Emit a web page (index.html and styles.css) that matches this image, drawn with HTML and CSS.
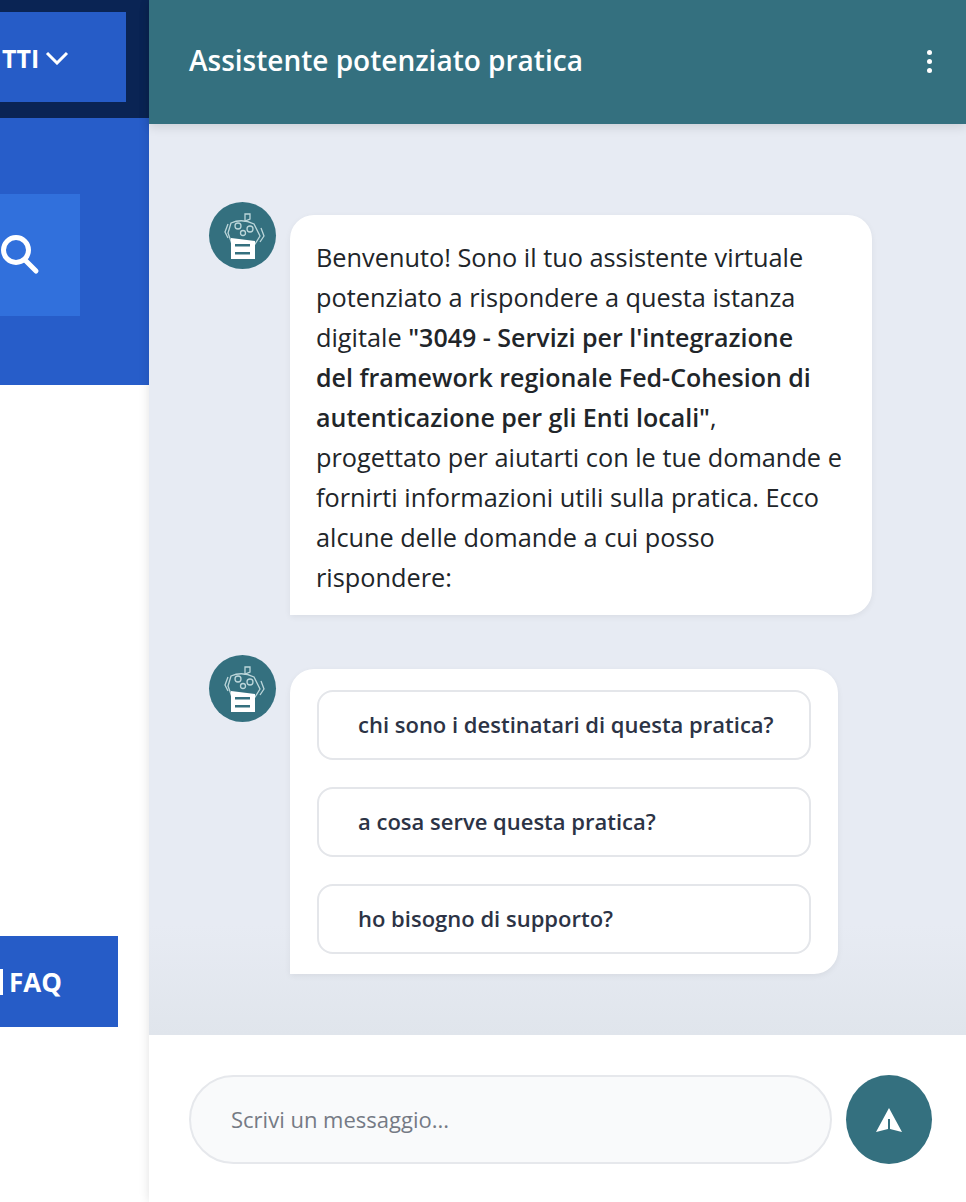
FILE: index.html
```html
<!DOCTYPE html>
<html lang="it">
<head>
    <meta charset="UTF-8">
    <title>Assistente potenziato pratica</title>
    <link rel="stylesheet" href="styles.css">
</head>
<body>

<div class="page">
    <div class="side">
        <div class="topbar">
            <div class="menu-button">
                <span>TTI</span>
                <svg class="chevron" width="24" height="14" viewBox="0 0 24 14"><path d="M2 2l10 10L22 2" fill="none" stroke="#fff" stroke-width="3"/></svg>
            </div>
        </div>
        <div class="hero">
            <div class="search-button">
                <svg width="40" height="44" viewBox="0 0 40 44"><circle cx="16" cy="17" r="12.5" fill="none" stroke="#fff" stroke-width="5"/><path d="M25 27l11 11" stroke="#fff" stroke-width="5" stroke-linecap="round"/></svg>
            </div>
        </div>
        <div class="side-body">
            <div class="faq-button"><span class="faq-icon"></span><span>FAQ</span></div>
        </div>
    </div>

    <div class="chat">
        <div class="chat-header">
            <h1>Assistente potenziato pratica</h1>
            <div class="dots"><span></span><span></span><span></span></div>
        </div>

        <div class="chat-body">
            <div class="message">
                <div class="avatar">
                    <svg width="46" height="50" viewBox="0 0 46 50">
                        <g fill="none" stroke="#bcd6da" stroke-width="1.3">
                            <path d="M11 12q11-5 23 1l6 12-5 8H12L8 22z"/>
                            <circle cx="18" cy="15" r="3"/><circle cx="30" cy="18" r="3"/><circle cx="23" cy="22" r="2.5"/>
                            <path d="M25 10V3h5v5z"/><path d="M8 13l-3 8 3 6M41 17l3 8-4 6"/>
                        </g>
                        <path d="M11 27l24 3v18H11z" fill="#fff"/>
                        <path d="M15 33h15v2.5H15zM15 41h15v2.5H15z" fill="#34707f"/>
                    </svg>
                </div>
                <div class="bubble text-bubble">
                    Benvenuto! Sono il tuo assistente virtuale potenziato a rispondere a questa istanza digitale <b>"3049 - Servizi per l'integrazione<br>del framework regionale Fed-Cohesion di autenticazione per gli Enti locali"</b>, progettato per aiutarti con le tue domande e fornirti informazioni utili sulla pratica. Ecco alcune delle domande a cui posso rispondere:
                </div>
            </div>

            <div class="message">
                <div class="avatar">
                    <svg width="46" height="50" viewBox="0 0 46 50">
                        <g fill="none" stroke="#bcd6da" stroke-width="1.3">
                            <path d="M11 12q11-5 23 1l6 12-5 8H12L8 22z"/>
                            <circle cx="18" cy="15" r="3"/><circle cx="30" cy="18" r="3"/><circle cx="23" cy="22" r="2.5"/>
                            <path d="M25 10V3h5v5z"/><path d="M8 13l-3 8 3 6M41 17l3 8-4 6"/>
                        </g>
                        <path d="M11 27l24 3v18H11z" fill="#fff"/>
                        <path d="M15 33h15v2.5H15zM15 41h15v2.5H15z" fill="#34707f"/>
                    </svg>
                </div>
                <div class="bubble options-bubble">
                    <div class="option">chi sono i destinatari di questa pratica?</div>
                    <div class="option">a cosa serve questa pratica?</div>
                    <div class="option">ho bisogno di supporto?</div>
                </div>
            </div>
        </div>

        <div class="chat-footer">
            <div class="chat-input">Scrivi un messaggio...</div>
            <div class="send-button">
                <svg width="28" height="26" viewBox="0 0 28 26"><path d="M14 1l13 24-12-3V12h-2v10L1 25z" fill="#fff"/></svg>
            </div>
        </div>
    </div>
</div>

</body>
</html>
```

FILE: styles.css
```css
body {
    margin: 0;
    font-family: "Open Sans", "Noto Sans", Arial, sans-serif;
    background-color: #fff;
}

.page {
    display: flex;
    width: 966px;
    height: 1202px;
    overflow: hidden;
}

/* left part of the page, cut off by the chat panel */
.side {
    width: 149px;
    flex-shrink: 0;
    display: flex;
    flex-direction: column;
}

.topbar {
    height: 118px;
    box-sizing: border-box;
    padding-top: 12px;
    background-color: #0a2454;
}

.menu-button {
    width: 126px;
    height: 90px;
    display: flex;
    align-items: center;
    gap: 6px;
    padding: 2px 0 0 2px;
    box-sizing: border-box;
    background-color: #265cc7;
    color: #fff;
    font-size: 25px;
    font-weight: 700;
}

.chevron {
    flex-shrink: 0;
}

.hero {
    height: 267px;
    box-sizing: border-box;
    padding-top: 76px;
    background-color: #275dc9;
}

.search-button {
    width: 80px;
    height: 122px;
    display: flex;
    align-items: center;
    box-sizing: border-box;
    background-color: #3170dc;
}

.side-body {
    flex: 1;
    padding-top: 551px;
}

.faq-button {
    width: 118px;
    height: 91px;
    display: flex;
    align-items: center;
    gap: 6px;
    background-color: #265cc7;
    color: #fff;
    font-size: 26px;
    font-weight: 700;
}

.faq-icon {
    width: 3px;
    height: 26px;
    background-color: #fff;
}

.chat {
    flex: 1;
    display: flex;
    flex-direction: column;
    box-shadow: 0 0 10px rgba(0, 0, 0, 0.12);
    position: relative;
}

.chat-header {
    height: 124px;
    flex-shrink: 0;
    display: flex;
    align-items: center;
    justify-content: space-between;
    padding: 0 34px 5px 40px;
    box-sizing: border-box;
    background-color: #34707f;
    box-shadow: 0 3px 10px rgba(0, 0, 0, 0.12);
    color: #fff;
    position: relative;
}

.chat-header h1 {
    margin: 0;
    font-size: 28px;
    font-weight: 600;
}

.dots {
    display: flex;
    flex-direction: column;
    gap: 4px;
    padding-top: 3px;
}

.dots span {
    width: 5px;
    height: 5px;
    border-radius: 50%;
    background-color: #fff;
}

.chat-body {
    flex: 1;
    display: flex;
    flex-direction: column;
    gap: 40px;
    padding: 78px 0 0 60px;
    background: linear-gradient(to bottom, #e7ebf3 88%, #e0e5ec 100%);
}

.message {
    display: flex;
    align-items: flex-start;
    gap: 14px;
}

.avatar {
    width: 67px;
    height: 67px;
    flex-shrink: 0;
    display: flex;
    align-items: center;
    justify-content: center;
    border-radius: 50%;
    background-color: #34707f;
}

.bubble {
    margin-top: 13px;
    background-color: #fff;
    border-radius: 24px 24px 24px 0;
    box-shadow: 0 2px 6px rgba(0, 0, 0, 0.06);
    box-sizing: border-box;
}

.text-bubble {
    width: 582px;
    padding: 22px 26px 18px;
    font-size: 25.3px;
    line-height: 40px;
    color: #212529;
}

.text-bubble b {
    font-size: 25px;
    font-weight: 600;
}

.options-bubble {
    width: 548px;
    margin-top: 14px;
    padding: 21px 27px 20px;
    display: flex;
    flex-direction: column;
    gap: 27px;
}

.option {
    height: 70px;
    display: flex;
    align-items: center;
    padding: 0 0 3px 39px;
    border: 2px solid #e4e6ea;
    border-radius: 16px;
    box-sizing: border-box;
    font-size: 22px;
    font-weight: 600;
    color: #2c3345;
}

.chat-footer {
    height: 167px;
    flex-shrink: 0;
    display: flex;
    align-items: flex-start;
    gap: 14px;
    padding: 40px 34px 0 40px;
    box-sizing: border-box;
    background-color: #fff;
}

.chat-input {
    width: 643px;
    height: 89px;
    display: flex;
    align-items: center;
    padding: 0 0 2px 40px;
    border: 2px solid #e6e8ec;
    border-radius: 45px;
    box-sizing: border-box;
    background-color: #f9fafb;
    font-size: 22px;
    color: #757a85;
}

.send-button {
    width: 86px;
    height: 89px;
    display: flex;
    align-items: center;
    justify-content: center;
    border-radius: 50%;
    background-color: #34707f;
}
```
